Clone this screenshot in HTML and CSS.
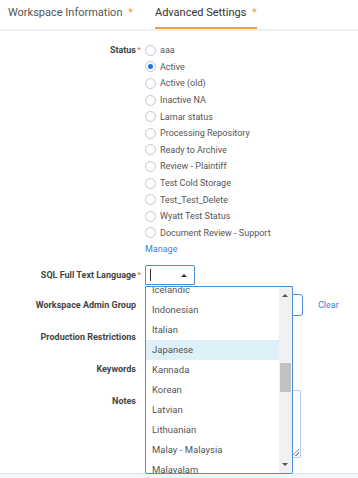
FILE: index.html
```html
<!DOCTYPE html>
<html>
<head>
  <meta charset="UTF-8">
  <title>Workspace - Advanced Settings</title>
  <link rel="stylesheet" href="styles.css">
</head>
<body>
  <div class="tabs">
    <div class="tab">Workspace Information <span class="req">*</span></div>
    <div class="tab active">Advanced Settings <span class="req">*</span></div>
  </div>

  <div class="form">
    <div class="row status-row">
      <div class="label">Status<span class="req">*</span></div>
      <div class="field">
        <div class="radio-list">
          <label class="radio"><span class="dot"></span>aaa</label>
          <label class="radio checked"><span class="dot"></span>Active</label>
          <label class="radio"><span class="dot"></span>Active (old)</label>
          <label class="radio"><span class="dot"></span>Inactive NA</label>
          <label class="radio"><span class="dot"></span>Lamar status</label>
          <label class="radio"><span class="dot"></span>Processing Repository</label>
          <label class="radio"><span class="dot"></span>Ready to Archive</label>
          <label class="radio"><span class="dot"></span>Review - Plaintiff</label>
          <label class="radio"><span class="dot"></span>Test Cold Storage</label>
          <label class="radio"><span class="dot"></span>Test_Test_Delete</label>
          <label class="radio"><span class="dot"></span>Wyatt Test Status</label>
          <label class="radio"><span class="dot"></span>Document Review - Support</label>
        </div>
        <a class="manage" href="#">Manage</a>
      </div>
    </div>

    <div class="row sql-row">
      <div class="label">SQL Full Text Language<span class="req">*</span></div>
      <div class="field">
        <div class="select-wrap">
          <div class="select open">
            <span class="caret"></span>
            <span class="arrow-up"></span>
          </div>
          <div class="dropdown">
            <ul class="options">
              <li>Icelandic</li>
              <li>Indonesian</li>
              <li>Italian</li>
              <li class="hover">Japanese</li>
              <li>Kannada</li>
              <li>Korean</li>
              <li>Latvian</li>
              <li>Lithuanian</li>
              <li>Malay - Malaysia</li>
              <li>Malayalam</li>
            </ul>
            <div class="scrollbar">
              <span class="sb-up"></span>
              <span class="sb-thumb"></span>
              <span class="sb-down"></span>
            </div>
          </div>
        </div>
      </div>
    </div>

    <div class="row admin-row">
      <div class="label">Workspace Admin Group</div>
      <div class="field inline">
        <div class="input admin-input"></div>
        <a class="clear" href="#">Clear</a>
      </div>
    </div>

    <div class="row plain-row">
      <div class="label">Production Restrictions</div>
      <div class="field"></div>
    </div>

    <div class="row plain-row">
      <div class="label">Keywords</div>
      <div class="field"></div>
    </div>

    <div class="row notes-row">
      <div class="label">Notes</div>
      <div class="field">
        <div class="textarea"><span class="grip"></span></div>
      </div>
    </div>
  </div>

  <div class="footer"></div>
</body>
</html>
```

FILE: styles.css
```css
body {
  margin: 0;
  font-family: Roboto, "Noto Sans", Arial, sans-serif;
  color: #333;
  background-color: #fff;
  width: 358px;
  height: 478px;
  overflow: hidden;
}

.req {
  color: #e8573c;
  font-weight: normal;
}

/* tabs */
.tabs {
  display: flex;
  height: 29px;
  border-bottom: 2px solid #edf1f5;
  padding-left: 8px;
}

.tab {
  font-size: 11px;
  color: #555;
  line-height: 26px;
  margin-right: 22px;
  box-sizing: border-box;
  height: 29px;
}

.tab .req {
  color: #f0a040;
  margin-left: 3px;
}

.tab.active {
  color: #333;
  border-bottom: 2px solid #f0a040;
}

/* form */
.form {
  padding-top: 11px;
}

.row {
  display: grid;
  grid-template-columns: 145px 1fr;
}

.label {
  text-align: right;
  padding-right: 9px;
  font-size: 9px;
  font-weight: bold;
  color: #444;
  position: relative;
}

.label .req {
  position: absolute;
  right: 4px;
  font-size: 8px;
}

.status-row .label {
  line-height: 16.5px;
}

.radio-list {
  display: flex;
  flex-direction: column;
}

.radio {
  display: flex;
  align-items: center;
  height: 16.6px;
  font-size: 9px;
  color: #555;
}

.dot {
  width: 9px;
  height: 9px;
  border: 1px solid #b9c8d9;
  border-radius: 50%;
  margin-right: 4px;
  box-sizing: content-box;
  position: relative;
}

.radio.checked .dot::after {
  content: "";
  position: absolute;
  left: 2px;
  top: 2px;
  width: 5px;
  height: 5px;
  border-radius: 50%;
  background-color: #1a73e8;
}

.manage {
  display: block;
  font-size: 9px;
  line-height: 16.5px;
  color: #3d7fd6;
  text-decoration: none;
}

/* sql select */
.sql-row {
  margin-top: 7px;
}

.sql-row .label {
  line-height: 20px;
}

.select-wrap {
  position: relative;
  height: 20px;
}

.select {
  width: 50px;
  height: 20px;
  box-sizing: border-box;
  border: 1px solid #4a90d9;
  border-radius: 2px 2px 0 0;
  position: relative;
}

.caret {
  position: absolute;
  left: 4px;
  top: 3px;
  width: 1px;
  height: 12px;
  background-color: #333;
}

.arrow-up {
  position: absolute;
  left: 35px;
  top: 8px;
  border-left: 3px solid transparent;
  border-right: 3px solid transparent;
  border-bottom: 3px solid #333;
}

.dropdown {
  position: absolute;
  left: 0;
  top: 21px;
  width: 148px;
  height: 188px;
  box-sizing: border-box;
  border: 1px solid #4a90d9;
  border-radius: 0 0 2px 2px;
  background-color: #fff;
  overflow: hidden;
  z-index: 5;
}

.options {
  list-style: none;
  margin: -7px 0 0 0;
  padding: 0;
  width: 133px;
}

.options li {
  height: 20px;
  line-height: 20px;
  font-size: 9.5px;
  color: #555;
  padding-left: 6px;
}

.options li.hover {
  background-color: #dff1f8;
}

.scrollbar {
  position: absolute;
  right: 0;
  top: 0;
  bottom: 0;
  width: 13px;
  background-color: #f1f1f1;
}

.sb-up,
.sb-down {
  position: absolute;
  left: 3px;
  border-left: 3.5px solid transparent;
  border-right: 3.5px solid transparent;
}

.sb-up {
  top: 7px;
  border-bottom: 3.5px solid #505050;
}

.sb-down {
  bottom: 7px;
  border-top: 3.5px solid #505050;
}

.sb-thumb {
  position: absolute;
  left: 1px;
  right: 1px;
  top: 76px;
  height: 29px;
  background-color: #c1c1c1;
}

/* other rows */
.admin-row {
  margin-top: 9px;
}

.admin-row .label {
  line-height: 22px;
}

.inline {
  display: flex;
  align-items: center;
}

.input {
  height: 22px;
  box-sizing: border-box;
  border: 1px solid #4a90d9;
  border-radius: 3px;
}

.admin-input {
  width: 158px;
}

.clear {
  margin-left: 15px;
  font-size: 9px;
  color: #3d7fd6;
  text-decoration: none;
}

.plain-row {
  margin-top: 11px;
  height: 21px;
}

.plain-row .label {
  line-height: 21px;
}

.notes-row {
  margin-top: 10px;
}

.notes-row .label {
  line-height: 22px;
}

.textarea {
  width: 156px;
  height: 68px;
  box-sizing: border-box;
  border: 1px solid #b9cde4;
  border-radius: 2px;
  position: relative;
}

.grip {
  position: absolute;
  right: 1px;
  bottom: 1px;
  width: 7px;
  height: 7px;
  background: linear-gradient(135deg, transparent 45%, #999 45%, #999 55%, transparent 55%, transparent 70%, #999 70%, #999 80%, transparent 80%);
}

.footer {
  margin-top: 15px;
  height: 20px;
  border-top: 1px solid #dde3ea;
  background-color: #f3f6f9;
}
```
